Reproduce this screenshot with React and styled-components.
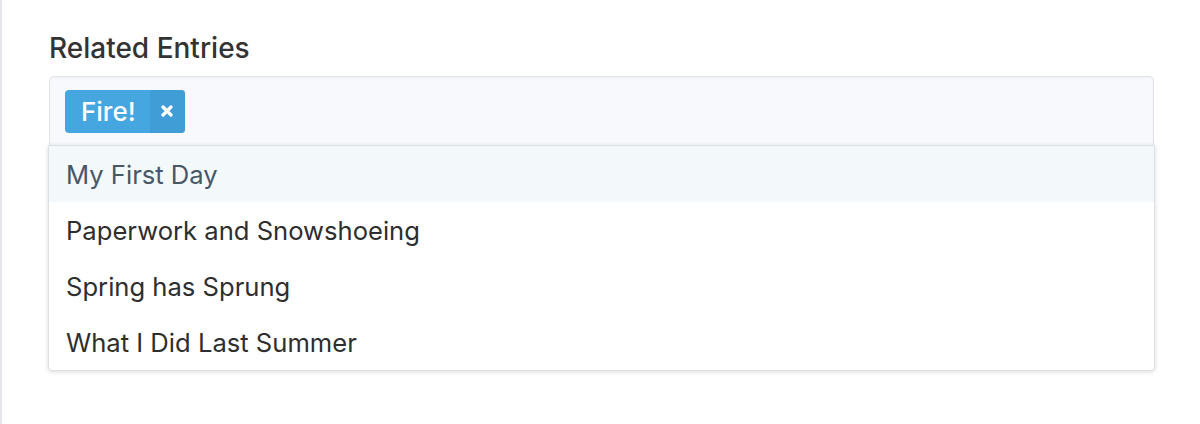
import React from 'react';
import styled, { createGlobalStyle } from 'styled-components';

const GlobalStyle = createGlobalStyle`
  html, body {
    margin: 0;
    padding: 0;
    background: #fff;
  }
  body {
    font-family: Inter, "Noto Sans", "Liberation Sans", sans-serif;
    -webkit-font-smoothing: antialiased;
  }
`;

const Page = styled.div`
  height: 424px;
  border-left: 2px solid #e6e8ec;
  padding: 28px 46px 0 47px;
  box-sizing: border-box;
`;

const Label = styled.div`
  font-size: 28px;
  font-weight: 500;
  color: #333;
  line-height: 40px;
  margin-bottom: 8px;
`;

const Field = styled.div`
  position: relative;
`;

const Control = styled.div`
  display: flex;
  align-items: center;
  gap: 8px;
  height: 69px;
  padding: 0 14px 0 15px;
  background: #f7f9fc;
  border: 1px solid #e1e4e8;
  border-bottom: none;
  border-radius: 5px 5px 0 0;
  box-sizing: border-box;
  box-shadow: inset 0 1px 2px rgba(0, 0, 0, 0.04);
`;

const Tag = styled.div`
  display: flex;
  align-items: stretch;
  height: 43px;
  border-radius: 4px;
  overflow: hidden;
  background: #46a6df;
  color: #fff;
`;

const TagText = styled.span`
  display: flex;
  align-items: center;
  padding: 0 14px 0 16px;
  font-size: 26px;
  font-weight: 500;
`;

const TagRemove = styled.span`
  display: flex;
  align-items: center;
  justify-content: center;
  width: 35px;
  background: #419dd5;
`;

const Menu = styled.ul`
  position: absolute;
  top: 69px;
  left: -1px;
  right: -1px;
  margin: 0;
  padding: 0;
  list-style: none;
  background: #fff;
  border: 1px solid #dcdfe3;
  border-radius: 0 0 4px 4px;
  box-shadow: 0 1px 5px rgba(0, 0, 0, 0.14);
`;

const Option = styled.li`
  height: 56px;
  display: flex;
  align-items: center;
  padding: 0 17px;
  font-size: 25.6px;
  color: ${(p) => (p.active ? '#475766' : '#2e2e2e')};
  background: ${(p) => (p.active ? '#f3f8fb' : 'transparent')};
`;

const options = [
  'My First Day',
  'Paperwork and Snowshoeing',
  'Spring has Sprung',
  'What I Did Last Summer',
];

export default function App() {
  return (
    <>
      <GlobalStyle />
      <Page>
        <Label>Related Entries</Label>
        <Field>
          <Control>
            <Tag>
              <TagText>Fire!</TagText>
              <TagRemove>
                <svg width="12" height="12" viewBox="0 0 12 12">
                  <path
                    d="M2 2 L10 10 M10 2 L2 10"
                    stroke="#fff"
                    strokeWidth="3.2"
                    strokeLinecap="round"
                  />
                </svg>
              </TagRemove>
            </Tag>
          </Control>
          <Menu>
            {options.map((o, i) => (
              <Option key={o} active={i === 0}>
                {o}
              </Option>
            ))}
          </Menu>
        </Field>
      </Page>
    </>
  );
}
